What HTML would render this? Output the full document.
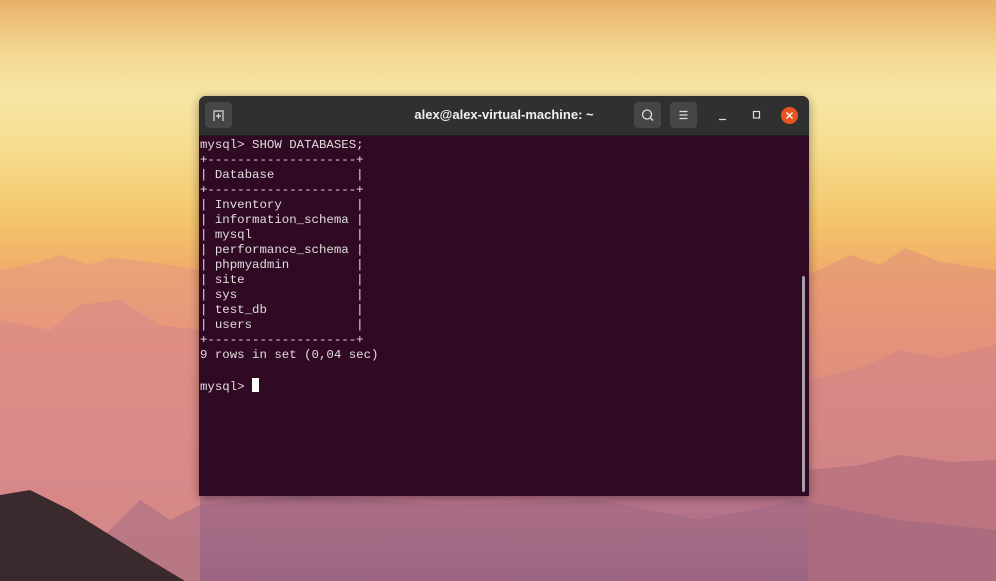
<!DOCTYPE html>
<html><head><style>
html,body{margin:0;padding:0;width:996px;height:581px;overflow:hidden}
body{position:relative;background:linear-gradient(180deg,#e8b06a 0%,#f3d48e 8%,#f7e6a6 16%,#f6dc8e 26%,#f4c56a 38%,#f0a96a 48%,#e8947a 58%,#d88686 68%,#c47a8e 80%,#a06884 100%)}
svg.bg{position:absolute;left:0;top:0}
.win{position:absolute;left:199px;top:96px;width:610px;height:400px;background:#300a24;border-radius:7px 7px 0 0;box-shadow:0 2px 10px rgba(0,0,0,.4);overflow:hidden}
.tb{height:39px;background:#303030;position:relative;border-bottom:1px solid #1e1e1e}
.title{position:absolute;left:0;right:0;top:11px;text-align:center;color:#f0f0f0;font:bold 13px "Liberation Sans",sans-serif}
.btn{position:absolute;top:6px;width:27px;height:26px;background:#464646;border-radius:4px}
pre{margin:0;position:absolute;left:1px;top:42px;color:#e0dcdc;font:12.4px/15px "Liberation Mono",monospace}
.cur{display:inline-block;width:7px;height:14px;background:#fff;vertical-align:-2px}
.sb{position:absolute;left:603px;top:180px;width:3px;height:216px;background:#a8a0a4;border-radius:2px}
</style></head><body>
<svg class="bg" width="996" height="581">
<polygon fill="#e69a80" opacity=".6" points="0,270 40,262 60,255 90,265 110,258 150,262 200,270 200,581 0,581"/>
<polygon fill="#d8868a" opacity=".55" points="0,320 50,330 80,305 120,300 160,325 200,330 200,581 0,581"/>
<polygon fill="#e3927a" opacity=".6" points="808,275 850,255 880,265 905,248 940,262 996,270 996,581 808,581"/>
<polygon fill="#cf8289" opacity=".5" points="808,380 860,368 900,350 940,358 996,345 996,581 808,581"/>
<polygon fill="#a8667c" opacity=".5" points="808,470 860,465 900,455 950,462 996,460 996,581 808,581"/>
<polygon fill="#9a6480" opacity=".45" points="100,540 140,500 170,520 200,505 300,495 450,505 600,500 700,520 800,500 900,520 996,530 996,581 100,581"/>
<polygon fill="#3a2a2e" points="0,495 30,490 70,510 110,535 150,560 185,581 0,581"/>
</svg>
<div class="win">
<div class="tb">
<div class="btn" style="left:6px"><svg width="27" height="26"><path d="M9 19V9h9v10M13.5 11.5v5M11 14h5" stroke="#ddd" fill="none" stroke-width="1.2"/></svg></div>
<div class="title">alex@alex-virtual-machine: ~</div>
<div class="btn" style="left:435px"><svg width="27" height="26"><circle cx="13" cy="12.5" r="4.5" stroke="#ddd" fill="none" stroke-width="1.3"/><path d="M16 15.5l3 3" stroke="#ddd" stroke-width="1.4"/></svg></div>
<div class="btn" style="left:471px"><svg width="27" height="26"><path d="M9.5 9.5h8M9.5 13h8M9.5 16.5h8" stroke="#ddd" stroke-width="1.2"/></svg></div>
<svg style="position:absolute;left:515px;top:10px" width="20" height="20"><path d="M5 13.5h7" stroke="#ddd" stroke-width="1.3"/></svg>
<svg style="position:absolute;left:549px;top:10px" width="20" height="20"><rect x="5.5" y="5.5" width="6" height="6.5" stroke="#ddd" fill="none" stroke-width="1.2"/></svg>
<div style="position:absolute;left:582px;top:11px;width:17px;height:17px;border-radius:50%;background:#e95420"><svg width="17" height="17"><path d="M5.5 5.5l6 6M11.5 5.5l-6 6" stroke="#fff" stroke-width="1.3"/></svg></div>
</div>
<pre>mysql&gt; SHOW DATABASES;
+--------------------+
| Database           |
+--------------------+
| Inventory          |
| information_schema |
| mysql              |
| performance_schema |
| phpmyadmin         |
| site               |
| sys                |
| test_db            |
| users              |
+--------------------+
9 rows in set (0,04 sec)

mysql&gt; <span class="cur"></span></pre>
<div class="sb"></div>
</div>
</body></html>
